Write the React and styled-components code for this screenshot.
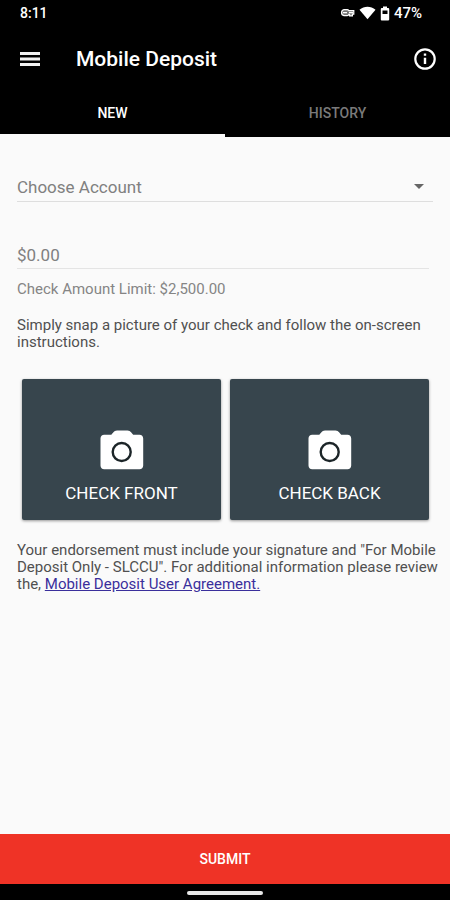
import React, { useState } from 'react';
import styled, { createGlobalStyle } from 'styled-components';

const tabs = ['New', 'History'];
const sides = ['Check Front', 'Check Back'];

const VpnIcon = () => (
  <svg width="15" height="10" viewBox="0 0 15 10" aria-hidden="true">
    <path
      d="M4 1.7h3.2c.8 0 1.3.4 1.7 1h4.9v3.5h-1.4v1.7H9.6V6.4h-.8c-.4.8-1 1.2-1.8 1.2H4a3 3 0 0 1 0-5.9z"
      fill="#777"
      stroke="#fff"
      strokeWidth="1.2"
    />
    <path d="M3 4.6h4M9 4.6h4" stroke="#fff" strokeWidth="1.2" />
  </svg>
);

const WifiIcon = () => (
  <svg width="17" height="14" viewBox="0 0 18 14" aria-hidden="true">
    <path d="M9 13.6.5 3.6C3 1.6 6 .5 9 .5s6 1.1 8.500 3.100z" fill="#fff" />
  </svg>
);

const BatteryIcon = () => (
  <svg width="10" height="15" viewBox="0 0 10 15" aria-hidden="true">
    <path
      fillRule="evenodd"
      d="M3 .5h4V2h1.3c.5 0 .9.4.9.9v10.700c0 .5-.4.9-.9.9H1.700c-.5 0-.9-.4-.9-.9V2.900c0-.5.4-.9.900-.9H3zM2.500 4.500v3.500h5V4.500z"
      fill="#fff"
    />
  </svg>
);

const MenuIcon = () => (
  <svg width="20" height="16" viewBox="0 0 20 16" aria-hidden="true">
    <path d="M0 2.5h20M0 8h20M0 13.5h20" stroke="#f2f2f2" strokeWidth="3" />
  </svg>
);

const InfoIcon = () => (
  <svg width="22" height="22" viewBox="0 0 22 22" aria-hidden="true">
    <circle cx="11" cy="11" r="9.7" fill="none" stroke="#fff" strokeWidth="2.2" />
    <path d="M11 5.5v2.3M11 9.7v6.3" stroke="#fff" strokeWidth="2.4" />
  </svg>
);

const CameraIcon = () => (
  <svg width="44" height="40" viewBox="0 0 44 40" aria-hidden="true">
    <path
      d="M17 .5h10.5c1.600 0 2.800.8 3.800 2l1.900 2.300H39.500c2.200 0 3.700 1.500 3.700 3.700v27c0 2.200-1.500 3.700-3.700 3.700H4.200C2 39.200.5 37.700.5 35.500v-27c0-2.200 1.500-3.700 3.700-3.700h7.100l1.900-2.300c1-1.200 2.200-2 3.800-2z"
      fill="#fff"
    />
    <circle cx="21.7" cy="22" r="9" fill="none" stroke="#1c2528" strokeWidth="2.4" />
  </svg>
);

export default function App() {
  const [activeTab, setActiveTab] = useState('New');
  const [account, setAccount] = useState('');
  const [amount, setAmount] = useState('');

  return (
    <Screen>
      <GlobalStyle />
      <StatusBar>
        <span>8:11</span>
        <StatusIcons>
          <VpnIcon />
          <WifiIcon />
          <BatteryIcon />
          <Percent>47%</Percent>
        </StatusIcons>
      </StatusBar>

      <AppBar>
        <IconButton aria-label="Menu">
          <MenuIcon />
        </IconButton>
        <Title>Mobile Deposit</Title>
        <IconButton aria-label="Information">
          <InfoIcon />
        </IconButton>
      </AppBar>

      <TabBar>
        {tabs.map((tab) => (
          <Tab key={tab} $active={tab === activeTab} onClick={() => setActiveTab(tab)}>
            {tab}
          </Tab>
        ))}
      </TabBar>

      <Content>
        <AccountField>
          <Select
            aria-label="Account"
            value={account}
            onChange={(e) => setAccount(e.target.value)}
          >
            <option value="">Choose Account</option>
          </Select>
          <Caret />
        </AccountField>

        <AmountInput
          aria-label="Check amount"
          inputMode="decimal"
          placeholder="$0.00"
          value={amount}
          onChange={(e) => setAmount(e.target.value)}
        />
        <Hint>Check Amount Limit: $2,500.00</Hint>

        <Text>Simply snap a picture of your check and follow the on-screen instructions.</Text>

        <Cards>
          {sides.map((side) => (
            <CheckButton key={side}>
              <CameraIcon />
              {side}
            </CheckButton>
          ))}
        </Cards>

        <Text>
          Your endorsement must include your signature and "For Mobile Deposit Only - SLCCU". For
          additional information please review the, <a href="#agreement">Mobile Deposit User Agreement.</a>
        </Text>
      </Content>

      <SubmitButton>Submit</SubmitButton>
      <NavBar>
        <HomeHandle />
      </NavBar>
    </Screen>
  );
}

// Styled Components
const GlobalStyle = createGlobalStyle`
  * {
    box-sizing: border-box;
  }

  body {
    margin: 0;
    background: #fafafa;
  }

  body, button, input, select {
    font-family: Roboto, sans-serif;
  }
`;

const Screen = styled.div`
  display: flex;
  flex-direction: column;
  min-height: 100vh;
  background: #fafafa;
`;

const StatusBar = styled.div`
  display: flex;
  align-items: center;
  justify-content: space-between;
  height: 26px;
  padding: 0 28px 0 20px;
  background: #000;
  color: #fff;
  font-size: 14px;
  font-weight: 500;
`;

const StatusIcons = styled.div`
  display: flex;
  align-items: center;
  gap: 4px;
`;

const Percent = styled.span`
  font-size: 15px;
`;

const AppBar = styled.header`
  display: flex;
  align-items: center;
  height: 66px;
  padding: 0 14px 0 20px;
  background: #000;
`;

const IconButton = styled.button`
  display: flex;
  padding: 0;
  border: none;
  background: none;
  cursor: pointer;
`;

const Title = styled.h1`
  flex: 1;
  margin: 0 0 0 36px;
  color: #fff;
  font-size: 21px;
  font-weight: 500;
`;

const TabBar = styled.nav`
  display: flex;
  height: 45px;
  background: #000;
`;

const Tab = styled.button`
  flex: 1;
  padding: 0;
  border: none;
  border-bottom: 3px solid ${({ $active }) => ($active ? '#fafafa' : '#000')};
  background: none;
  color: ${({ $active }) => ($active ? '#fff' : '#7a7a7a')};
  font-size: 14px;
  font-weight: 500;
  text-transform: uppercase;
  cursor: pointer;
`;

const Content = styled.main`
  flex: 1;
  padding: 36px 9px 24px 17px;
`;

const AccountField = styled.div`
  position: relative;
  margin-right: 8px;
  border-bottom: 1px solid #dedede;
`;

const Select = styled.select`
  display: block;
  width: 100%;
  height: 28px;
  padding: 0;
  border: none;
  outline: none;
  appearance: none;
  background: none;
  color: #808080;
  font-size: 17px;
`;

const Caret = styled.span`
  position: absolute;
  top: 11px;
  right: 9px;
  border: 5px solid transparent;
  border-top-color: #666;
  border-bottom: none;
  pointer-events: none;
`;

const AmountInput = styled.input`
  display: block;
  width: calc(100% - 12px);
  height: 28px;
  margin-top: 39px;
  padding: 0;
  border: none;
  border-bottom: 1px solid #e4e4e4;
  outline: none;
  background: none;
  color: #333;
  font-size: 17px;

  &::placeholder {
    color: #808080;
  }
`;

const Hint = styled.p`
  margin: 11px 0 19px;
  color: #858585;
  font-size: 15px;
  line-height: 18px;
`;

const Text = styled.p`
  margin: 0;
  color: #505050;
  font-size: 15px;
  line-height: 17px;

  a {
    color: #3a2f9c;
  }
`;

const Cards = styled.div`
  display: grid;
  grid-template-columns: 1fr 1fr;
  gap: 9px;
  margin: 28px 12px 22px 5px;
`;

const CheckButton = styled.button`
  display: flex;
  flex-direction: column;
  align-items: center;
  gap: 13px;
  padding: 51px 0 17px;
  border: none;
  border-radius: 2px;
  background: #37454d;
  box-shadow: 0 1px 3px rgba(0, 0, 0, 0.4);
  color: #fff;
  font-size: 17px;
  line-height: 20px;
  text-transform: uppercase;
  cursor: pointer;
`;

const SubmitButton = styled.button`
  height: 50px;
  border: none;
  background: #ef3326;
  color: #fff;
  font-size: 14px;
  font-weight: 500;
  text-transform: uppercase;
  cursor: pointer;
`;

const NavBar = styled.div`
  display: flex;
  justify-content: center;
  padding: 7px 0 5px;
  background: #000;
`;

const HomeHandle = styled.div`
  width: 76px;
  height: 4px;
  border-radius: 2px;
  background: #e8e8e8;
`;
